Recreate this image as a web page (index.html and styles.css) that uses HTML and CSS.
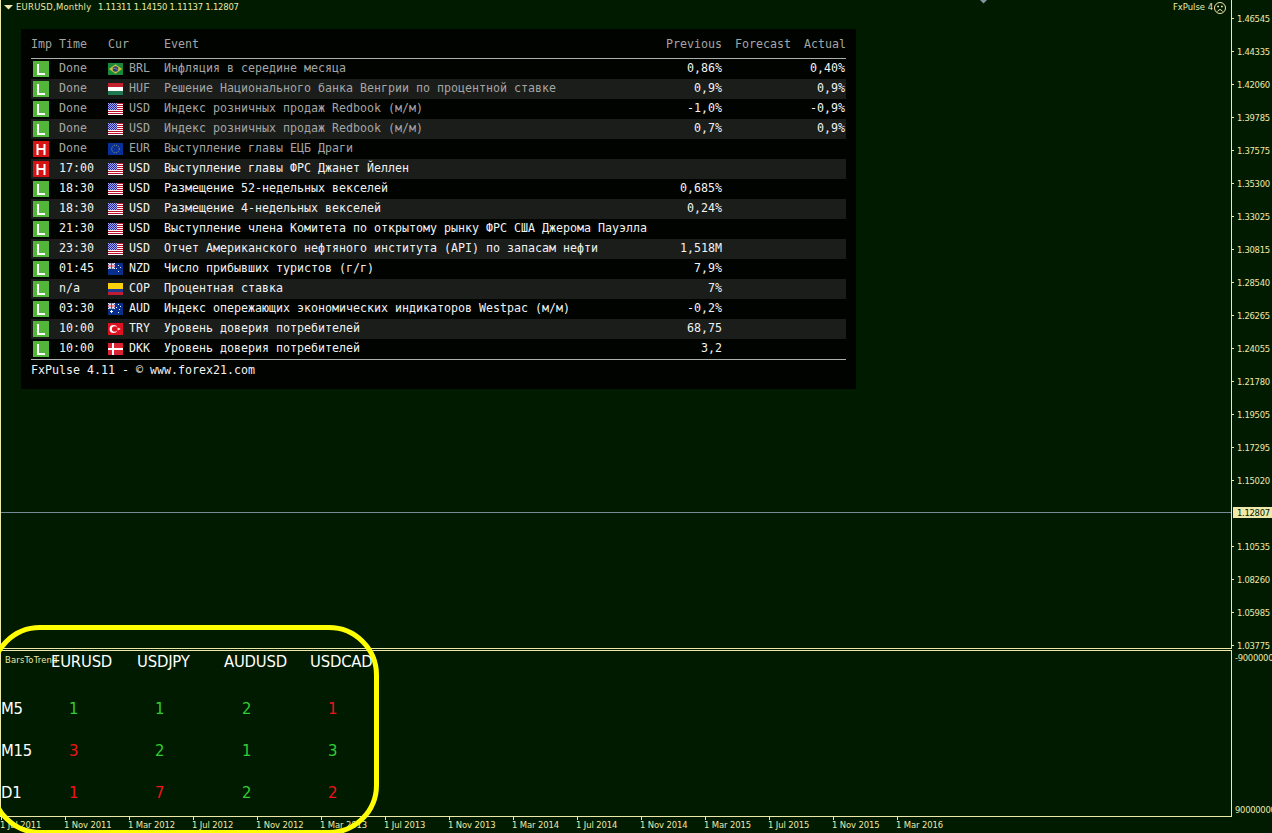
FILE: index.html
```html
<!DOCTYPE html>
<html lang="ru">
<head>
<meta charset="utf-8">
<title>EURUSD,Monthly</title>
<link rel="stylesheet" href="styles.css">
</head>
<body>
<svg class="defs" width="0" height="0">
  <symbol id="br" viewBox="0 0 15 12"><path fill="#198a3c" d="M0 0h15v12H0z"/><path fill="#c9c234" d="M7.500 1.200 14 6 7.500 10.800 1 6z"/><circle cx="7.500" cy="6" r="2.800" fill="#2b3f80"/><path d="M5.200 5.300q2.500-.5 4.600 1.500" stroke="#9ab" stroke-width=".7" fill="none"/></symbol>
  <symbol id="hu" viewBox="0 0 15 12"><path fill="#c2202f" d="M0 0h15v4H0z"/><path fill="#fff" d="M0 4h15v4H0z"/><path fill="#1d7a50" d="M0 8h15v4H0z"/></symbol>
  <symbol id="us" viewBox="0 0 15 12"><path fill="#fff" d="M0 0h15v12H0z"/><path fill="#b8122c" d="M0 0h15v1H0zM0 2h15v1H0zM0 4h15v1H0zM0 6h15v1H0zM0 8h15v1H0zM0 10h15v1H0z"/><path fill="#2424a8" d="M0 0h9v7H0z"/><path fill="none" stroke="#a9a9f0" stroke-dasharray="1 1" d="M0 .5h9M1 1.500h8M0 2.500h9M1 3.500h8M0 4.500h9M1 5.500h8M0 6.500h9"/></symbol>
  <symbol id="eu" viewBox="0 0 15 12"><path fill="#08309a" d="M0 0h15v12H0z"/><circle cx="7.500" cy="6" r="3.800" fill="none" stroke="#a3a65c" stroke-width=".9" stroke-dasharray="1 1"/></symbol>
  <symbol id="jack" viewBox="0 0 7 6"><path fill="#23409a" d="M0 0h7v6H0z"/><path stroke="#fff" stroke-width="1.200" d="M0 0l7 6M7 0 0 6"/><path stroke="#fff" stroke-width="2.200" d="M3.500 0v6M0 3h7"/><path stroke="#d8213a" d="M3.500 0v6M0 3h7"/></symbol>
  <symbol id="nz" viewBox="0 0 15 12"><path fill="#082f8c" d="M0 0h15v12H0z"/><use href="#jack" width="7" height="6"/><path fill="#e9dfee" d="M10 2h1v1h-1zM12 4h1v1h-1zM8 5h1v1H8zM10 8h1v1h-1z"/></symbol>
  <symbol id="au" viewBox="0 0 15 12"><path fill="#082f8c" d="M0 0h15v12H0z"/><use href="#jack" width="7" height="6"/><path fill="#fff" d="M10 1h1v1h-1zM12 3h1v1h-1zM8 4h1v1H8zM11 6h1v1h-1zM10 9h1v1h-1zM3 7h1v1h1v1H4v1H3V9H2V8h1z"/></symbol>
  <symbol id="co" viewBox="0 0 15 12"><path fill="#fbd00d" d="M0 0h15v6H0z"/><path fill="#20398c" d="M0 6h15v3H0z"/><path fill="#c11b35" d="M0 9h15v3H0z"/></symbol>
  <symbol id="tr" viewBox="0 0 15 12"><path fill="#df1020" d="M0 0h15v12H0z"/><circle cx="5.500" cy="6" r="3.900" fill="#fff"/><circle cx="6.700" cy="6" r="2.800" fill="#df1020"/><path fill="#fff" d="M9 6l1.200-.4.300-1.200.8 1 1.100-.3-.6.900.6.900-1.100-.3-.8 1-.3-1.200z"/></symbol>
  <symbol id="dk" viewBox="0 0 15 12"><path fill="#d92232" d="M0 0h15v12H0z"/><path stroke="#fff" stroke-width="2" d="M5 0v12M0 6h15"/></symbol>
  <symbol id="low" viewBox="0 0 16 16"><path fill="#53b53a" d="M0 0h16v16H0z"/><path stroke="#fff" stroke-width="2" fill="none" d="M5 3v10h7"/></symbol>
  <symbol id="high" viewBox="0 0 16 16"><path fill="#d61414" d="M0 0h16v16H0z"/><path stroke="#fff" stroke-width="2" fill="none" d="M4.500 3v11M11.500 3v11M4 8h8"/></symbol>
</svg>

<div class="terminal">
  <main class="chart">
    <header class="title-bar">
      <svg class="caret" width="9" height="5"><path fill="#f0e8b0" d="M0 0h9L4.500 4.500z"/></svg>
      <span class="symbol">EURUSD,Monthly</span>
      <span class="quotes">1.11311 1.14150 1.11137 1.12807</span>
      <svg class="shift" width="9" height="5"><path fill="#8296a0" d="M0 0h9L4.500 4.500z"/></svg>
      <span class="expert">FxPulse 4</span>
      <svg class="face" width="12" height="12" fill="none" stroke="#eee8aa"><circle cx="6" cy="6" r="5.500"/><path d="M3.500 9.500Q6 5.500 8.500 9.500"/><path stroke-width="1.500" d="M3.200 4.500H5M7 4.500h1.800"/></svg>
    </header>

    <section class="panel">
      <div class="row head"><span class="imp">Imp</span><span class="time">Time</span><span class="cur">Cur</span><span class="event">Event</span><span class="num">Previous</span><span class="num fc">Forecast</span><span class="num act">Actual</span></div>
      <div class="rows">
        <div class="row done"><svg class="badge"><use href="#low"/></svg><span class="time">Done</span><svg class="flag"><use href="#br"/></svg><span class="code">BRL</span><span class="event">Инфляция в середине месяца</span><span class="num">0,86%</span><span class="num last">0,40%</span></div>
        <div class="row done"><svg class="badge"><use href="#low"/></svg><span class="time">Done</span><svg class="flag"><use href="#hu"/></svg><span class="code">HUF</span><span class="event">Решение Национального банка Венгрии по процентной ставке</span><span class="num">0,9%</span><span class="num last">0,9%</span></div>
        <div class="row done"><svg class="badge"><use href="#low"/></svg><span class="time">Done</span><svg class="flag"><use href="#us"/></svg><span class="code">USD</span><span class="event">Индекс розничных продаж Redbook (м/м)</span><span class="num">-1,0%</span><span class="num last">-0,9%</span></div>
        <div class="row done"><svg class="badge"><use href="#low"/></svg><span class="time">Done</span><svg class="flag"><use href="#us"/></svg><span class="code">USD</span><span class="event">Индекс розничных продаж Redbook (м/м)</span><span class="num">0,7%</span><span class="num last">0,9%</span></div>
        <div class="row done"><svg class="badge"><use href="#high"/></svg><span class="time">Done</span><svg class="flag"><use href="#eu"/></svg><span class="code">EUR</span><span class="event">Выступление главы ЕЦБ Драги</span></div>
        <div class="row"><svg class="badge"><use href="#high"/></svg><span class="time">17:00</span><svg class="flag"><use href="#us"/></svg><span class="code">USD</span><span class="event">Выступление главы ФРС Джанет Йеллен</span></div>
        <div class="row"><svg class="badge"><use href="#low"/></svg><span class="time">18:30</span><svg class="flag"><use href="#us"/></svg><span class="code">USD</span><span class="event">Размещение 52-недельных векселей</span><span class="num">0,685%</span></div>
        <div class="row"><svg class="badge"><use href="#low"/></svg><span class="time">18:30</span><svg class="flag"><use href="#us"/></svg><span class="code">USD</span><span class="event">Размещение 4-недельных векселей</span><span class="num">0,24%</span></div>
        <div class="row"><svg class="badge"><use href="#low"/></svg><span class="time">21:30</span><svg class="flag"><use href="#us"/></svg><span class="code">USD</span><span class="event">Выступление члена Комитета по открытому рынку ФРС США Джерома Пауэлла</span></div>
        <div class="row"><svg class="badge"><use href="#low"/></svg><span class="time">23:30</span><svg class="flag"><use href="#us"/></svg><span class="code">USD</span><span class="event">Отчет Американского нефтяного института (API) по запасам нефти</span><span class="num">1,518M</span></div>
        <div class="row"><svg class="badge"><use href="#low"/></svg><span class="time">01:45</span><svg class="flag"><use href="#nz"/></svg><span class="code">NZD</span><span class="event">Число прибывших туристов (г/г)</span><span class="num">7,9%</span></div>
        <div class="row"><svg class="badge"><use href="#low"/></svg><span class="time">n/a</span><svg class="flag"><use href="#co"/></svg><span class="code">COP</span><span class="event">Процентная ставка</span><span class="num">7%</span></div>
        <div class="row"><svg class="badge"><use href="#low"/></svg><span class="time">03:30</span><svg class="flag"><use href="#au"/></svg><span class="code">AUD</span><span class="event">Индекс опережающих экономических индикаторов Westpac (м/м)</span><span class="num">-0,2%</span></div>
        <div class="row"><svg class="badge"><use href="#low"/></svg><span class="time">10:00</span><svg class="flag"><use href="#tr"/></svg><span class="code">TRY</span><span class="event">Уровень доверия потребителей</span><span class="num">68,75</span></div>
        <div class="row"><svg class="badge"><use href="#low"/></svg><span class="time">10:00</span><svg class="flag"><use href="#dk"/></svg><span class="code">DKK</span><span class="event">Уровень доверия потребителей</span><span class="num">3,2</span></div>
      </div>
      <footer class="credit">FxPulse 4.11 - © www.forex21.com</footer>
    </section>
    <div class="bid-line"></div>
  </main>

  <aside class="prices">
    <span>1.46545</span><span>1.44335</span><span>1.42060</span><span>1.39785</span><span>1.37575</span><span>1.35300</span><span>1.33025</span><span>1.30815</span><span>1.28540</span><span>1.26265</span><span>1.24055</span><span>1.21780</span><span>1.19505</span><span>1.17295</span><span>1.15020</span><span class="bid">1.12807</span><span>1.10535</span><span>1.08260</span><span>1.05985</span><span>1.03775</span>
  </aside>

  <section class="indicator">
    <span class="name">BarsToTrend</span>
    <div class="trend heads"><span></span><b>EURUSD</b><b>USDJPY</b><b>AUDUSD</b><b>USDCAD</b></div>
    <div class="trend"><span>M5</span><i>1</i><i>1</i><i>2</i><i class="down">1</i></div>
    <div class="trend"><span>M15</span><i class="down">3</i><i>2</i><i>1</i><i>3</i></div>
    <div class="trend"><span>D1</span><i class="down">1</i><i class="down">7</i><i>2</i><i class="down">2</i></div>
  </section>

  <aside class="scale"><span>-90000000</span><span>90000000</span></aside>

  <footer class="dates">
    <span>1 Jul 2011</span><span>1 Nov 2011</span><span>1 Mar 2012</span><span>1 Jul 2012</span><span>1 Nov 2012</span><span>1 Mar 2013</span><span>1 Jul 2013</span><span>1 Nov 2013</span><span>1 Mar 2014</span><span>1 Jul 2014</span><span>1 Nov 2014</span><span>1 Mar 2015</span><span>1 Jul 2015</span><span>1 Nov 2015</span><span>1 Mar 2016</span>
  </footer>
  <div class="marker"></div>
</div>
</body>
</html>
```
FILE: styles.css
```css
* { box-sizing: border-box; }
body { margin: 0; background: #001b00; overflow: hidden; }
.defs { position: absolute; }

.terminal {
  position: relative;
  display: grid;
  grid-template: 649px 168px 16px / 1232px 40px;
  width: 1272px;
  height: 833px;
  overflow: hidden;
  color: #eee8aa;
  font: 9.4px/12px "DejaVu Sans Condensed", "DejaVu Sans", sans-serif;
  letter-spacing: -0.15px;
  white-space: nowrap;
}

.chart {
  position: relative;
  border: 1px solid #eee8aa;
  border-top: 0;
}
.title-bar { display: flex; height: 29px; padding: 1px 5px 0 3px; }
.caret { margin-top: 4px; }
.symbol { width: 76px; margin-left: 3px; letter-spacing: 0.26px; }
.quotes { width: 150px; margin-left: 6px; letter-spacing: -0.22px; }
.shift { margin: -2px 0 0 731px; }
.expert { width: 40px; margin-left: auto; letter-spacing: 0; }
.face { margin: 1px 0 0 1px; }

.panel {
  width: 835px;
  height: 360px;
  margin-left: 20px;
  padding: 0 10px;
  background: #000300;
  color: #f2f2f2;
  font: 11.63px/20px "DejaVu Sans Mono", monospace;
  letter-spacing: 0;
}
.row {
  display: grid;
  grid-template-columns: 28px 49px 21px 35px 418px 140px 123px;
  height: 20px;
  line-height: 18px;
}
.head {
  height: 29px;
  padding-top: 5px;
  line-height: 20px;
  grid-template-columns: 28px 49px 56px 418px 140px 69px 55px;
  color: #a5a5a5;
}
.rows { border: solid #aab0aa; border-width: 1px 0; }
.row:nth-child(even) { background: #1a1d1a; }
.done { color: #a5a5a5; }
.badge { width: 16px; height: 16px; margin: 2px 0 0 2px; }
.flag { width: 15px; height: 12px; margin-top: 4px; }
.num { color: #f2f2f2; text-align: right; }
.head .num { color: #a5a5a5; }
.credit { line-height: 21px; }

.bid-line {
  position: absolute;
  top: 512px;
  left: 0;
  right: 0;
  height: 1px;
  background: #778899;
}

.prices { display: flex; flex-direction: column; padding-top: 2px; }
.prices span {
  display: flex;
  align-items: center;
  height: 33px;
  flex: none;
  letter-spacing: -0.3px;
}
.prices span::before {
  content: "";
  width: 2px;
  height: 1px;
  margin-right: 3px;
  background: #eee8aa;
}
.prices .bid {
  height: 11px;
  margin: 10px 0 12px 1px;
  background: #eee8aa;
  color: #001b00;
}
.prices .bid::before { width: 1px; }

.indicator {
  position: relative;
  margin-top: 1px;
  border: 1px solid #eee8aa;
}
.name { position: absolute; left: 4px; top: 3px; letter-spacing: 0.2px; }
.trend {
  position: relative;
  display: grid;
  grid-template-columns: 50px 86px 87px 86px 66px;
  height: 42px;
  color: #fff;
  font: 16.5px/42px "DejaVu Sans Condensed", "DejaVu Sans", sans-serif;
  letter-spacing: -0.3px;
}
.trend b { font-weight: 400; letter-spacing: -0.2px; }
.trend i { font-style: normal; padding-left: 18px; color: #32cd32; }
.trend .down { color: #f01414; }
.heads { height: 37px; line-height: 22px; }

.scale {
  display: flex;
  flex-direction: column;
  justify-content: space-between;
  padding: 3px 0 1px 3px;
  letter-spacing: -0.3px;
}

.dates { grid-column: 1 / -1; display: flex; }
.dates span {
  position: relative;
  width: 64px;
  flex: none;
  padding-top: 2px;
  letter-spacing: -0.1px;
}
.dates span::before {
  content: "";
  position: absolute;
  top: 0;
  left: 1px;
  width: 1px;
  height: 3px;
  background: #eee8aa;
}

/* highlight ring drawn over the indicator window */
.marker {
  position: absolute;
  left: -10px;
  top: 625px;
  width: 389px;
  height: 210px;
  border: 5px solid #ffff00;
  border-radius: 50px;
}
```
